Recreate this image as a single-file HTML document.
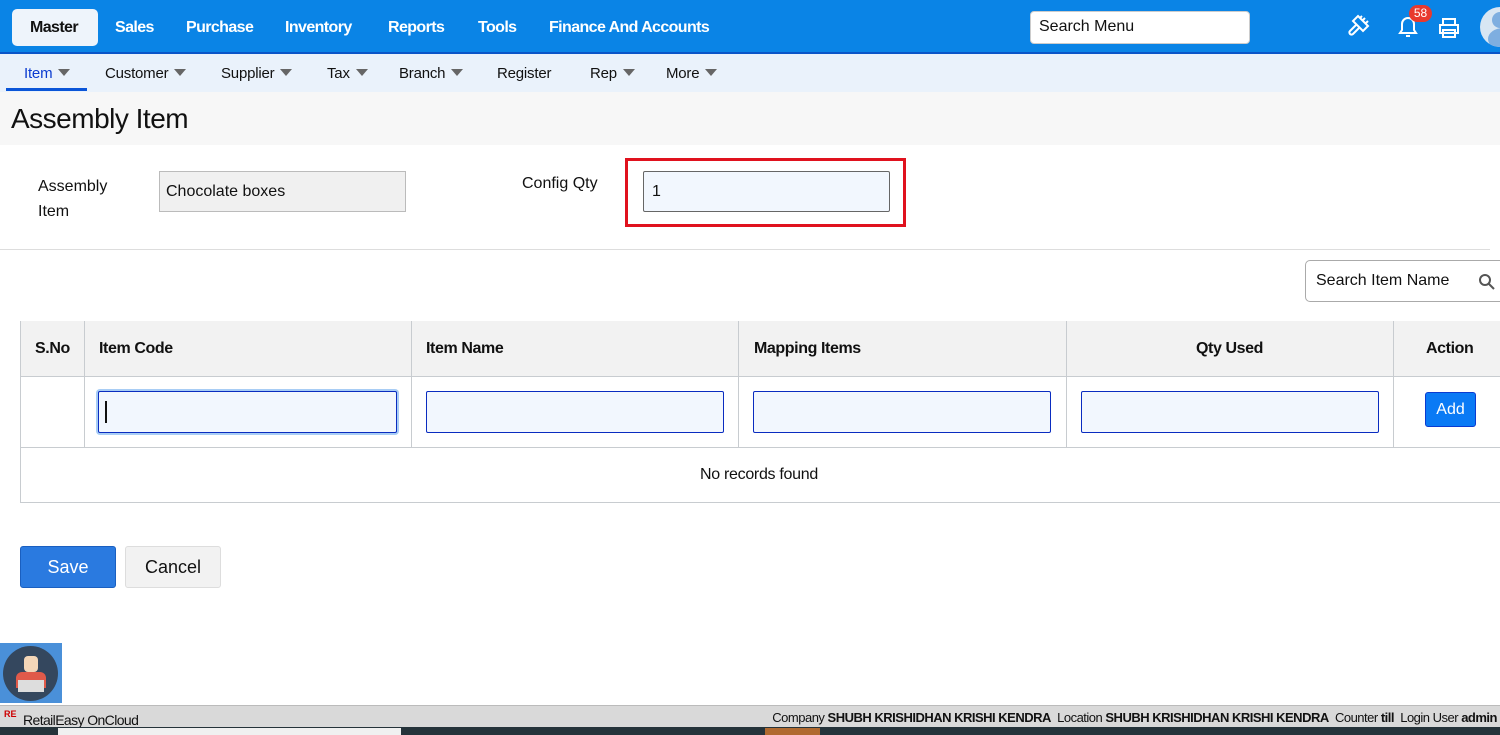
<!DOCTYPE html>
<html><head><meta charset="utf-8"><style>
*{box-sizing:border-box;margin:0;padding:0}
body{width:1500px;height:735px;overflow:hidden;position:relative;background:#fff;font-family:"Liberation Sans",sans-serif;color:#111}
.a{position:absolute}
.top{left:0;top:0;width:1500px;height:54px;background:#0a84e6;border-bottom:2px solid #0a55c8}
.tm{top:19px;color:#fff;font-size:16px;font-weight:bold;letter-spacing:-0.6px}
.sub{left:0;top:54px;width:1500px;height:38px;background:#eaf2fb}
.si{top:65px;font-size:15px;color:#111;letter-spacing:-0.2px}
.tri{display:inline-block;width:0;height:0;border-left:6px solid transparent;border-right:6px solid transparent;border-top:7px solid #666;margin-left:6px;vertical-align:2px}
.inp{border:1px solid #0a2cc0;background:#f2f7fe;border-radius:2px}
.th{top:321px;height:56px;background:#f2f2f2;font-weight:bold;font-size:16px;line-height:56px;letter-spacing:-0.4px}
.vl{width:1px;background:#c8ccd0}
</style></head><body>
<div class="a top"></div>
<div class="a" style="left:12px;top:9px;width:86px;height:37px;background:#eef4fb;border-radius:5px"></div>
<div class="a tm" style="left:30px;color:#111">Master</div>
<div class="a tm" style="left:115px">Sales</div>
<div class="a tm" style="left:186px">Purchase</div>
<div class="a tm" style="left:285px">Inventory</div>
<div class="a tm" style="left:388px">Reports</div>
<div class="a tm" style="left:478px">Tools</div>
<div class="a tm" style="left:549px">Finance And Accounts</div>
<div class="a" style="left:1030px;top:11px;width:220px;height:33px;background:#fff;border-radius:4px;border:1px solid #ccc;font-size:16px;padding:6px 8px">Search Menu</div>
<svg class="a" style="left:1346px;top:12px" width="28" height="28" viewBox="0 0 28 28" fill="none" stroke="#fff" stroke-width="2"><path d="M12 4l10 10-5 5-10-10z M14 6l2-2 M17 8l2-2 M20 11l2-2 M10 13l-6 6a2 2 0 003 3l6-6"/></svg>
<svg class="a" style="left:1396px;top:14px" width="24" height="26" viewBox="0 0 24 26" fill="none" stroke="#fff" stroke-width="2"><path d="M4 19h16l-2-3v-6a6 6 0 00-12 0v6z M10 22h4"/></svg>
<div class="a" style="left:1409px;top:5px;width:23px;height:17px;background:#e8392e;border-radius:9px;color:#fff;font-size:12px;text-align:center;line-height:17px">58</div>
<svg class="a" style="left:1437px;top:16px" width="24" height="24" viewBox="0 0 24 24" fill="none" stroke="#fff" stroke-width="2"><path d="M6 8V3h12v5 M3 9h18v8H3z M6 14h12v7H6z"/></svg>
<div class="a" style="left:1480px;top:7px;width:40px;height:40px;border-radius:50%;background:#d8e6f3;overflow:hidden"><div style="position:absolute;left:8px;top:21px;width:30px;height:22px;border-radius:50%;background:#7eaee0"></div><div style="position:absolute;left:12px;top:5px;width:16px;height:16px;border-radius:50%;background:#7eaee0"></div></div>
<div class="a sub"></div>
<div class="a si" style="left:24px;color:#0a3bd0">Item<span class="tri"></span></div>
<div class="a" style="left:6px;top:88px;width:81px;height:3px;background:#0a55d8"></div>
<div class="a si" style="left:105px">Customer<span class="tri"></span></div>
<div class="a si" style="left:221px">Supplier<span class="tri"></span></div>
<div class="a si" style="left:327px">Tax<span class="tri"></span></div>
<div class="a si" style="left:399px">Branch<span class="tri"></span></div>
<div class="a si" style="left:497px">Register</div>
<div class="a si" style="left:590px">Rep<span class="tri"></span></div>
<div class="a si" style="left:666px">More<span class="tri"></span></div>
<div class="a" style="left:0;top:92px;width:1500px;height:53px;background:#f7f7f7"></div>
<div class="a" style="left:11px;top:103px;font-size:28px;letter-spacing:-0.5px">Assembly Item</div>
<div class="a" style="left:38px;top:174px;font-size:16px;line-height:25px">Assembly<br>Item</div>
<div class="a" style="left:159px;top:171px;width:247px;height:41px;background:#f0f0f0;border:1px solid #bbb;font-size:16px;padding:11px 6px">Chocolate boxes</div>
<div class="a" style="left:522px;top:175px;font-size:16px">Config Qty</div>
<div class="a" style="left:625px;top:158px;width:281px;height:69px;border:3px solid #e0121e"></div>
<div class="a inp" style="left:643px;top:171px;width:247px;height:41px;border-color:#666;font-size:16px;padding:11px 8px">1</div>
<div class="a" style="left:0;top:249px;width:1490px;height:1px;background:#ddd"></div>
<div class="a" style="left:1305px;top:260px;width:200px;height:42px;border:1px solid #aaa;border-radius:5px;font-size:16px;padding:11px 10px">Search Item Name</div>
<svg class="a" style="left:1478px;top:273px" width="18" height="18" viewBox="0 0 18 18" fill="none" stroke="#555" stroke-width="2"><circle cx="7" cy="7" r="5"/><path d="M11 11l5 5"/></svg>
<div class="a" style="left:20px;top:321px;width:1480px;height:182px;border:1px solid #c8ccd0;border-right:none"></div>
<div class="a th" style="left:21px;width:1479px"></div>
<div class="a" style="left:20px;top:376px;width:1480px;height:1px;background:#c8ccd0"></div>
<div class="a" style="left:20px;top:447px;width:1480px;height:1px;background:#c8ccd0"></div>
<div class="a vl" style="left:84px;top:321px;height:126px"></div>
<div class="a vl" style="left:411px;top:321px;height:126px"></div>
<div class="a vl" style="left:738px;top:321px;height:126px"></div>
<div class="a vl" style="left:1066px;top:321px;height:126px"></div>
<div class="a vl" style="left:1393px;top:321px;height:126px"></div>
<div class="a th" style="left:35px;background:none">S.No</div>
<div class="a th" style="left:99px;background:none">Item Code</div>
<div class="a th" style="left:426px;background:none">Item Name</div>
<div class="a th" style="left:754px;background:none">Mapping Items</div>
<div class="a th" style="left:1196px;background:none">Qty Used</div>
<div class="a th" style="left:1426px;background:none">Action</div>
<div class="a inp" style="left:98px;top:391px;width:299px;height:42px;box-shadow:0 0 0 2px #a8cdf5"></div>
<div class="a" style="left:105px;top:401px;width:2px;height:22px;background:#111"></div>
<div class="a inp" style="left:426px;top:391px;width:298px;height:42px"></div>
<div class="a inp" style="left:753px;top:391px;width:298px;height:42px"></div>
<div class="a inp" style="left:1081px;top:391px;width:298px;height:42px"></div>
<div class="a" style="left:1425px;top:392px;width:51px;height:35px;background:#0a7af5;border:1px solid #0a3bd0;border-radius:3px;color:#fff;font-size:16px;text-align:center;line-height:33px">Add</div>
<div class="a" style="left:700px;top:466px;font-size:16px;letter-spacing:-0.3px">No records found</div>
<div class="a" style="left:20px;top:546px;width:96px;height:42px;background:#2a7ae0;border:1px solid #1a5fc0;border-radius:3px;color:#fff;font-size:18px;text-align:center;line-height:40px">Save</div>
<div class="a" style="left:125px;top:546px;width:96px;height:42px;background:#f2f2f2;border:1px solid #ddd;border-radius:3px;font-size:18px;text-align:center;line-height:40px">Cancel</div>
<div class="a" style="left:0;top:643px;width:62px;height:60px;background:#4a90d9"></div>
<div class="a" style="left:3px;top:646px;width:55px;height:55px;border-radius:50%;background:#34475e"></div>
<div class="a" style="left:16px;top:672px;width:30px;height:16px;background:#e05a4a;border-radius:6px 6px 0 0"></div>
<div class="a" style="left:24px;top:656px;width:14px;height:16px;background:#f3d6b8;border-radius:4px"></div>
<div class="a" style="left:18px;top:680px;width:26px;height:12px;background:#ddd"></div>
<div class="a" style="left:0;top:705px;width:1500px;height:22px;background:#d9d9d9;border-top:1px solid #bbb"></div>
<div class="a" style="left:4px;top:709px;font-size:9px;color:#c00;font-weight:bold">RE</div>
<div class="a" style="left:23px;top:712px;font-size:14px;letter-spacing:-0.6px">RetailEasy OnCloud</div>
<div class="a" style="right:3px;top:710px;font-size:13px;white-space:nowrap;letter-spacing:-0.5px">Company <b>SHUBH KRISHIDHAN KRISHI KENDRA</b>&nbsp; Location <b>SHUBH KRISHIDHAN KRISHI KENDRA</b>&nbsp; Counter <b>till</b>&nbsp; Login User <b>admin</b></div>
<div class="a" style="left:0;top:727px;width:1500px;height:8px;background:#25333a"></div>
<div class="a" style="left:58px;top:728px;width:343px;height:7px;background:#f0f0f0"></div>
<div class="a" style="left:765px;top:728px;width:55px;height:7px;background:#b06a30"></div>
</body></html>
